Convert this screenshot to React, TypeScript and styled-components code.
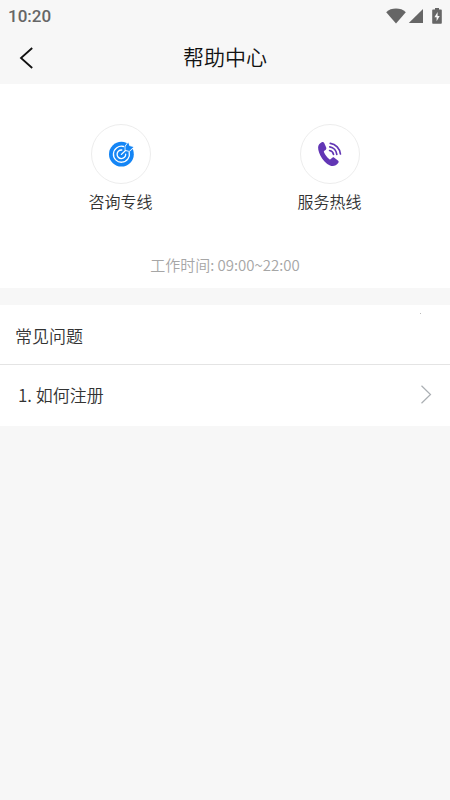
import React from "react";
import styled, { createGlobalStyle } from "styled-components";

const GlobalStyle = createGlobalStyle`
  * { box-sizing: border-box; }
  body {
    margin: 0;
    background: #f7f7f7;
    color: #333;
    font-family: "Noto Sans CJK SC", sans-serif;
    font-weight: 350;
  }
  button { font: inherit; color: inherit; background: none; border: 0; padding: 0; cursor: pointer; }
  svg { display: block; flex-shrink: 0; }
  h1, h2, p, ul { margin: 0; padding: 0; font-weight: inherit; }
`;

const Page = styled.div`
  display: flex;
  flex-direction: column;
  min-height: 100vh;
`;

const StatusBar = styled.div`
  display: flex;
  align-items: center;
  justify-content: space-between;
  height: 32px;
  padding: 0 8px;
  color: #666;
`;

const Clock = styled.time`
  font: 500 17px/32px Roboto, sans-serif;
`;

const StatusIcons = styled.div`
  display: grid;
  grid-template-columns: 20px 16px 16px;
  column-gap: 2px;
  align-items: center;
`;

const BatterySlot = styled.span`
  display: flex;
  justify-content: flex-end;
`;

const NavBar = styled.header`
  display: grid;
  grid-template-columns: 52px 1fr 52px;
  align-items: center;
  height: 52px;
`;

const BackButton = styled.button`
  display: flex;
  align-items: center;
  justify-content: center;
  height: 52px;
`;

const Title = styled.h1`
  font-size: 21px;
  line-height: 48px;
  padding-bottom: 4px;
  text-align: center;
  color: #111;
`;

const ContactPanel = styled.section`
  padding: 40px 16px 11px;
  background: #fff;
`;

const ContactGrid = styled.div`
  display: grid;
  grid-template-columns: 1fr 1fr;
`;

const Contact = styled.button`
  display: flex;
  flex-direction: column;
  align-items: center;
  gap: 5px;
  font-size: 16px;
  line-height: 24px;
`;

const IconCircle = styled.span`
  display: flex;
  align-items: center;
  justify-content: center;
  width: 60px;
  height: 60px;
  border: 1px solid #ededed;
  border-radius: 50%;
`;

const Hours = styled.p`
  margin-top: 40px;
  font-size: 15px;
  line-height: 24px;
  text-align: center;
  color: #a6a6a6;
`;

const FaqPanel = styled.section`
  margin-top: 17px;
  background: #fff;
`;

const FaqHeader = styled.div`
  display: flex;
  justify-content: space-between;
  padding: 2px 15px 0;
  border-bottom: 1px solid #e4e4e4;
`;

const FaqTitle = styled.h2`
  font-size: 17px;
  line-height: 57px;
`;

const Dot = styled.span`
  width: 1px;
  height: 1px;
  margin: 6px 14px 0 0;
  background: #bbb;
`;

const FaqList = styled.ul`
  list-style: none;
`;

const FaqRow = styled.button`
  display: flex;
  align-items: center;
  justify-content: space-between;
  width: 100%;
  height: 61px;
  padding: 0 18px 2px;
  font-size: 17px;
  line-height: 26px;
  text-align: left;
`;

const WifiIcon = () => (
  <svg width="20" height="16" viewBox="0 0 20 16" fill="currentColor" aria-hidden="true">
    <path d="M0.2 4.2C2.8 1.7 6.2.6 10 .6s7.2 1.1 9.8 3.6L10 15.6Z" />
  </svg>
);

const SignalIcon = () => (
  <svg width="16" height="16" viewBox="0 0 16 16" fill="currentColor" aria-hidden="true">
    <path d="M15 1v14H.8Z" />
  </svg>
);

const BatteryIcon = () => (
  <svg width="10" height="16" viewBox="0 0 10 16" aria-hidden="true">
    <path
      fill="currentColor"
      d="M3 0h4v1.6h1.8c.6 0 1 .4 1 1v12.2c0 .6-.4 1-1 1H1.2c-.6 0-1-.4-1-1V2.6c0-.6.4-1 1-1H3Z"
    />
    <path fill="#f7f7f7" d="M5.600 4 2.400 9.300h2.200v4L7.700 8H5.600Z" />
  </svg>
);

const BackIcon = () => (
  <svg width="14" height="22" viewBox="0 0 14 22" fill="none" stroke="#111" strokeWidth="1.8" aria-hidden="true">
    <path d="M13.200 1 2 11l11.200 10" />
  </svg>
);

const ChevronIcon = () => (
  <svg width="12" height="19" viewBox="0 0 12 19" fill="none" stroke="#aaafb3" strokeWidth="1.2" aria-hidden="true">
    <path d="m1.500.8 9 8.700-9 8.700" />
  </svg>
);

const TargetIcon = () => (
  <svg width="26" height="26" viewBox="0 0 26 26" fill="none" aria-hidden="true">
    <circle cx="13.400" cy="13.200" r="12.400" fill="#1485f5" />
    <g stroke="#fff" strokeWidth="1.300" strokeLinecap="round">
      <path d="M15.500 5.500A8 8 0 1 0 21.200 11.300" />
      <path d="M13.800 9A4.300 4.300 0 1 0 17.700 13.200" />
      <path d="m13.400 13.400 5.400-5.200" />
    </g>
    <path
      d="M17.400 5.400 20.200 1.600l1.300 3.300 4 1.200-4.200 3.900-3.800-.9Z"
      fill="#1485f5"
      stroke="#fff"
      strokeWidth="1.600"
      paintOrder="stroke"
      strokeLinejoin="round"
    />
  </svg>
);

const PhoneIcon = () => (
  <svg width="26" height="26" viewBox="0 0 26 26" fill="none" aria-hidden="true">
    <path
      fill="#6236b5"
      d="M4.700 1.200c1-.5 2-.2 2.500.8l2 4.500c.4 1 .1 1.800-.7 2.400L7.300 9.800c-.5.4-.6.9-.3 1.500 1.200 2.800 3 5.100 5.400 6.900.5.4 1 .3 1.400-.1l1.200-1.200c.7-.7 1.500-.8 2.300-.2l3.600 2.800c.9.700 1 1.700.3 2.500-1.500 1.900-3.300 3-5.500 3-3.300 0-7.600-3.200-10.600-7.600C2.500 13.600 1 9.500 1.100 6.300c.1-2.400 1.500-4.100 3.600-5.100Z"
    />
    <g stroke="#6236b5" strokeWidth="1.700" strokeLinecap="round">
      <path d="M13.300 2.300c5.400.6 9.600 5.200 10.100 10.700" />
      <path d="M12.800 5.900c3.700.5 6.500 3.700 7 7.400" />
      <path d="M12.600 9.500c2 .4 3.500 1.900 3.900 3.900" />
    </g>
  </svg>
);

const contacts = [
  { label: "咨询专线", icon: <TargetIcon /> },
  { label: "服务热线", icon: <PhoneIcon /> },
];

const questions = ["1. 如何注册"];

export default function App() {
  return (
    <Page>
      <GlobalStyle />
      <StatusBar>
        <Clock>10:20</Clock>
        <StatusIcons>
          <WifiIcon />
          <SignalIcon />
          <BatterySlot>
            <BatteryIcon />
          </BatterySlot>
        </StatusIcons>
      </StatusBar>
      <NavBar>
        <BackButton aria-label="返回">
          <BackIcon />
        </BackButton>
        <Title>帮助中心</Title>
      </NavBar>
      <main>
        <ContactPanel>
          <ContactGrid>
            {contacts.map((c) => (
              <Contact key={c.label}>
                <IconCircle>{c.icon}</IconCircle>
                {c.label}
              </Contact>
            ))}
          </ContactGrid>
          <Hours>工作时间: 09:00~22:00</Hours>
        </ContactPanel>
        <FaqPanel>
          <FaqHeader>
            <FaqTitle>常见问题</FaqTitle>
            <Dot />
          </FaqHeader>
          <FaqList>
            {questions.map((q) => (
              <li key={q}>
                <FaqRow>
                  {q}
                  <ChevronIcon />
                </FaqRow>
              </li>
            ))}
          </FaqList>
        </FaqPanel>
      </main>
    </Page>
  );
}
